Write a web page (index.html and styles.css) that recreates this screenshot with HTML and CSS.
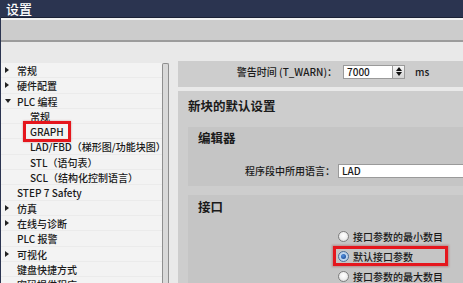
FILE: index.html
```html
<!DOCTYPE html>
<html lang="zh-CN">
<head>
<meta charset="utf-8">
<title>设置</title>
<link rel="stylesheet" href="styles.css">
</head>
<body>
<div class="window">
  <div class="titlebar">设置</div>
  <div class="toolbar"></div>
  <div class="main">
    <nav class="tree">
      <div class="row l0"><span class="arr right"></span>常规</div>
      <div class="row l0"><span class="arr right"></span>硬件配置</div>
      <div class="row l0"><span class="arr down"></span>PLC 编程</div>
      <div class="row l1">常规</div>
      <div class="row l1"><span class="hl">GRAPH</span></div>
      <div class="row l1">LAD/FBD（梯形图/功能块图）</div>
      <div class="row l1">STL（语句表）</div>
      <div class="row l1">SCL（结构化控制语言）</div>
      <div class="row l0 plain">STEP 7 Safety</div>
      <div class="row l0"><span class="arr right"></span>仿真</div>
      <div class="row l0"><span class="arr right"></span>在线与诊断</div>
      <div class="row l0 plain">PLC 报警</div>
      <div class="row l0"><span class="arr right"></span>可视化</div>
      <div class="row l0 plain">键盘快捷方式</div>
      <div class="row l0 plain">密码提供程序</div>
    </nav>
    <div class="splitter"></div>
    <div class="content">
      <section class="sec warn">
        <label class="lbl">警告时间 (T_WARN)：</label>
        <div class="field num">7000</div>
        <div class="spin"><span class="up"></span><span class="dn"></span></div>
        <span class="unit">ms</span>
      </section>
      <section class="sec defaults">
        <h2 class="sec-title">新块的默认设置</h2>
        <div class="sub editor">
          <h3 class="sub-title">编辑器</h3>
          <div class="form-row">
            <label class="lbl">程序段中所用语言：</label>
            <div class="field wide">LAD</div>
          </div>
        </div>
        <div class="sub iface">
          <h3 class="sub-title">接口</h3>
          <div class="radios">
            <div class="opt"><span class="radio"></span>接口参数的最小数目</div>
            <div class="opt selected marked"><span class="radio on"></span>默认接口参数</div>
            <div class="opt"><span class="radio"></span>接口参数的最大数目</div>
          </div>
        </div>
      </section>
    </div>
  </div>
</div>
</body>
</html>
```
FILE: styles.css
```css
* { box-sizing: border-box; }

html, body {
  margin: 0;
  width: 463px;
  height: 283px;
  overflow: hidden;
}

body {
  font-family: "Noto Sans CJK SC", "Liberation Sans", sans-serif;
  font-size: 10px;
  font-weight: 500;
  color: #1a1a1a;
  background: #e9e9e9;
}

.window {
  display: flex;
  flex-direction: column;
  height: 283px;
  border-left: 1px solid #2b3450;
}

.titlebar {
  height: 18px;
  background: #2b3450;
  border-bottom: 1px solid #1b2135;
  color: #ffffff;
  font-size: 13px;
  line-height: 17px;
  padding-left: 5px;
}

.toolbar {
  height: 24px;
  background: #cccccc;
  border-top: 2px solid #f2f2f2;
  border-bottom: 2px solid #9c9c9c;
}

.main {
  flex: 1;
  min-height: 0;
  display: flex;
  padding-top: 21px;
}

/* ---------- tree ---------- */
.tree {
  width: 161px;
  flex: none;
  background: #f3f3f3;
}

.row {
  height: 15.3px;
  line-height: 15.3px;
  display: flex;
  align-items: center;
  white-space: nowrap;
  box-shadow: inset 0 -1px 0 #ebebeb;
}

.row.l0 { padding-left: 4px; }
.row.l0.plain { padding-left: 16px; }
.row.l1 { padding-left: 29px; }

.arr {
  width: 12px;
  height: 8px;
  flex: none;
  position: relative;
}

.arr.right::before {
  content: "";
  position: absolute;
  left: 0;
  top: 0.5px;
  border-left: 4px solid #222;
  border-top: 3.5px solid transparent;
  border-bottom: 3.5px solid transparent;
}

.arr.down::before {
  content: "";
  position: absolute;
  left: 0;
  top: 2px;
  border-top: 4px solid #222;
  border-left: 3.5px solid transparent;
  border-right: 3.5px solid transparent;
}

.hl {
  display: inline-block;
  line-height: 15px;
  padding: 0 4px;
  margin-left: -4px;
  outline: 3px solid #e5161d;
  box-shadow: 0 0 2px 3px rgba(150, 0, 0, 0.35);
}

.splitter {
  width: 7px;
  flex: none;
  background: #d9d9d9;
  border: 1px solid #8f8f8f;
  border-bottom: none;
  border-radius: 2px 2px 0 0;
}

/* ---------- content ---------- */
.content {
  flex: 1;
  min-width: 0;
  margin-left: 9px;
  margin-top: -2px;
  overflow: hidden;
}

.sec { background: #cdcdcd; }

.warn {
  display: grid;
  grid-template-columns: 165px 50px 12px auto;
  align-items: center;
  padding: 3px 0 8px;
}

.lbl {
  text-align: right;
  white-space: nowrap;
  padding-right: 6px;
}

.field {
  height: 14px;
  line-height: 12px;
  background: #ffffff;
  border: 1px solid #9a9a9a;
  padding-left: 3px;
  white-space: nowrap;
}

.spin {
  height: 14px;
  background: linear-gradient(#f6f6f6, #d4d4d4);
  border: 1px solid #9a9a9a;
  border-left: none;
  display: flex;
  flex-direction: column;
  align-items: center;
  justify-content: center;
  gap: 1px;
}

.spin .up {
  border-bottom: 4px solid #111;
  border-left: 3px solid transparent;
  border-right: 3px solid transparent;
}

.spin .dn {
  border-top: 4px solid #111;
  border-left: 3px solid transparent;
  border-right: 3px solid transparent;
}

.unit { margin-left: 10px; }

.defaults {
  margin-top: 4px;
  padding: 8px 0 0 10px;
  min-height: 200px;
}

.sec-title,
.sub-title {
  margin: 0;
  font-size: 12.5px;
  font-weight: bold;
  line-height: 14px;
  white-space: nowrap;
}

.sec-title { margin-bottom: 14px; }

.sub {
  background: #c5c5c5;
  padding-left: 10px;
}

.editor {
  padding-top: 4px;
  padding-bottom: 8px;
  margin-bottom: 9px;
}

.form-row {
  display: grid;
  grid-template-columns: 140px 160px;
  align-items: center;
  margin-top: 18px;
}

.form-row .lbl { padding-right: 3px; }

.iface {
  padding-top: 5px;
  padding-bottom: 20px;
}

.radios {
  margin-top: 12px;
  margin-left: 135px;
}

.opt {
  height: 20px;
  display: flex;
  align-items: center;
  padding-left: 5px;
  white-space: nowrap;
}

.opt.marked {
  width: 115px;
  outline: 3px solid #e5161d;
  outline-offset: -3px;
  box-shadow: 0 0 2px 1px rgba(150, 0, 0, 0.3);
}

.radio {
  width: 11px;
  height: 11px;
  flex: none;
  margin-right: 4px;
  border-radius: 50%;
  border: 1px solid #7d7d7d;
  background: radial-gradient(circle at 50% 40%, #ffffff 0%, #f0f0f0 50%, #cfcfcf 100%);
  position: relative;
}

.radio.on {
  border-color: #4d6f95;
  background: radial-gradient(circle, #d6e6f7 0%, #a9c6e6 100%);
}

.radio.on::after {
  content: "";
  position: absolute;
  left: 2px;
  top: 2px;
  width: 5px;
  height: 5px;
  border-radius: 50%;
  background: radial-gradient(circle at 40% 35%, #4f8fe0, #123f86);
}
```
